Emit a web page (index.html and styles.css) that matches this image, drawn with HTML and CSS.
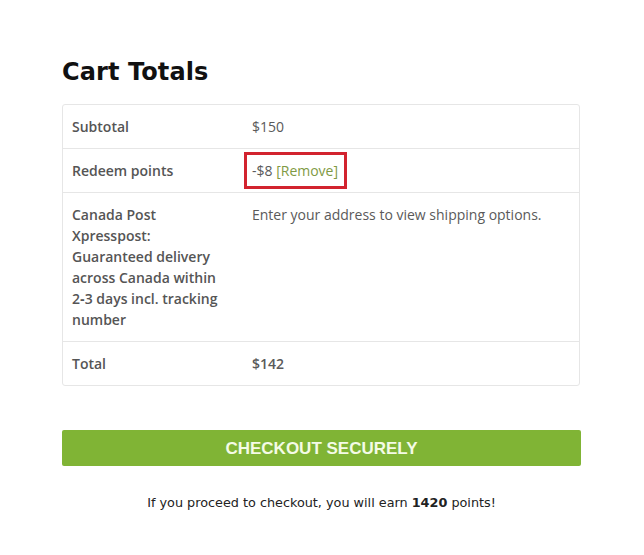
FILE: index.html
```html
<!DOCTYPE html>
<html>
<head>
<meta charset="utf-8">
<link rel="stylesheet" href="styles.css">
</head>
<body>
<div class="wrap">
  <h2 class="title">Cart Totals</h2>
  <table class="totals">
    <tr>
      <th>Subtotal</th>
      <td>$150</td>
    </tr>
    <tr>
      <th>Redeem points</th>
      <td><span class="redeem">-$8 <a class="remove">[Remove]</a></span></td>
    </tr>
    <tr>
      <th>Canada Post Xpresspost: Guaranteed delivery across Canada within 2&#8209;3 days incl. tracking number</th>
      <td>Enter your address to view shipping options.</td>
    </tr>
    <tr>
      <th>Total</th>
      <td><strong>$142</strong></td>
    </tr>
  </table>
  <div class="checkout">CHECKOUT SECURELY</div>
  <p class="earn">If you proceed to checkout, you will earn <b>1420</b> points!</p>
</div>
</body>
</html>
```
FILE: styles.css
```css
html, body {
  margin: 0;
  padding: 0;
  background: #fff;
}
.wrap {
  width: 519px;
  margin: 0 0 0 62px;
  padding-top: 56px;
}
.title {
  margin: 0 0 16px 0;
  font-family: "DejaVu Sans", sans-serif;
  font-weight: bold;
  font-size: 24px;
  line-height: 32px;
  color: #111;
  letter-spacing: 0.1px;
}
.totals {
  width: 518px;
  border-collapse: separate;
  border-spacing: 0;
  border: 1px solid #e6e6e6;
  border-radius: 3px;
  font-family: "Open Sans", sans-serif;
  font-size: 14px;
  line-height: 21px;
  color: #5a5a5a;
}
.totals th, .totals td {
  text-align: left;
  vertical-align: top;
  padding: 11px 9px 11px 9px;
  border-top: 1px solid #e6e6e6;
}
.totals tr:first-child th, .totals tr:first-child td {
  border-top: none;
}
.totals th {
  width: 161px;
  font-weight: 600;
  color: #555;
  padding-right: 10px;
}
.totals td strong {
  font-weight: 600;
}
.redeem {
  position: relative;
}
.redeem::after {
  content: "";
  position: absolute;
  left: -8px;
  right: -9px;
  top: -9px;
  bottom: -9px;
  border: 3px solid #d2232f;
}
.remove {
  color: #7f9a44;
}
.checkout {
  margin-top: 44px;
  width: 519px;
  height: 36px;
  background: #80b435;
  border-radius: 2px;
  color: #f4fbe6;
  font-family: "Liberation Sans", sans-serif;
  font-weight: bold;
  font-size: 17px;
  line-height: 38px;
  text-align: center;
}
.earn {
  margin: 29px 0 0 0;
  text-align: center;
  font-family: "DejaVu Sans", sans-serif;
  font-size: 12.8px;
  color: #222;
}
.earn b {
  font-weight: bold;
}
```
